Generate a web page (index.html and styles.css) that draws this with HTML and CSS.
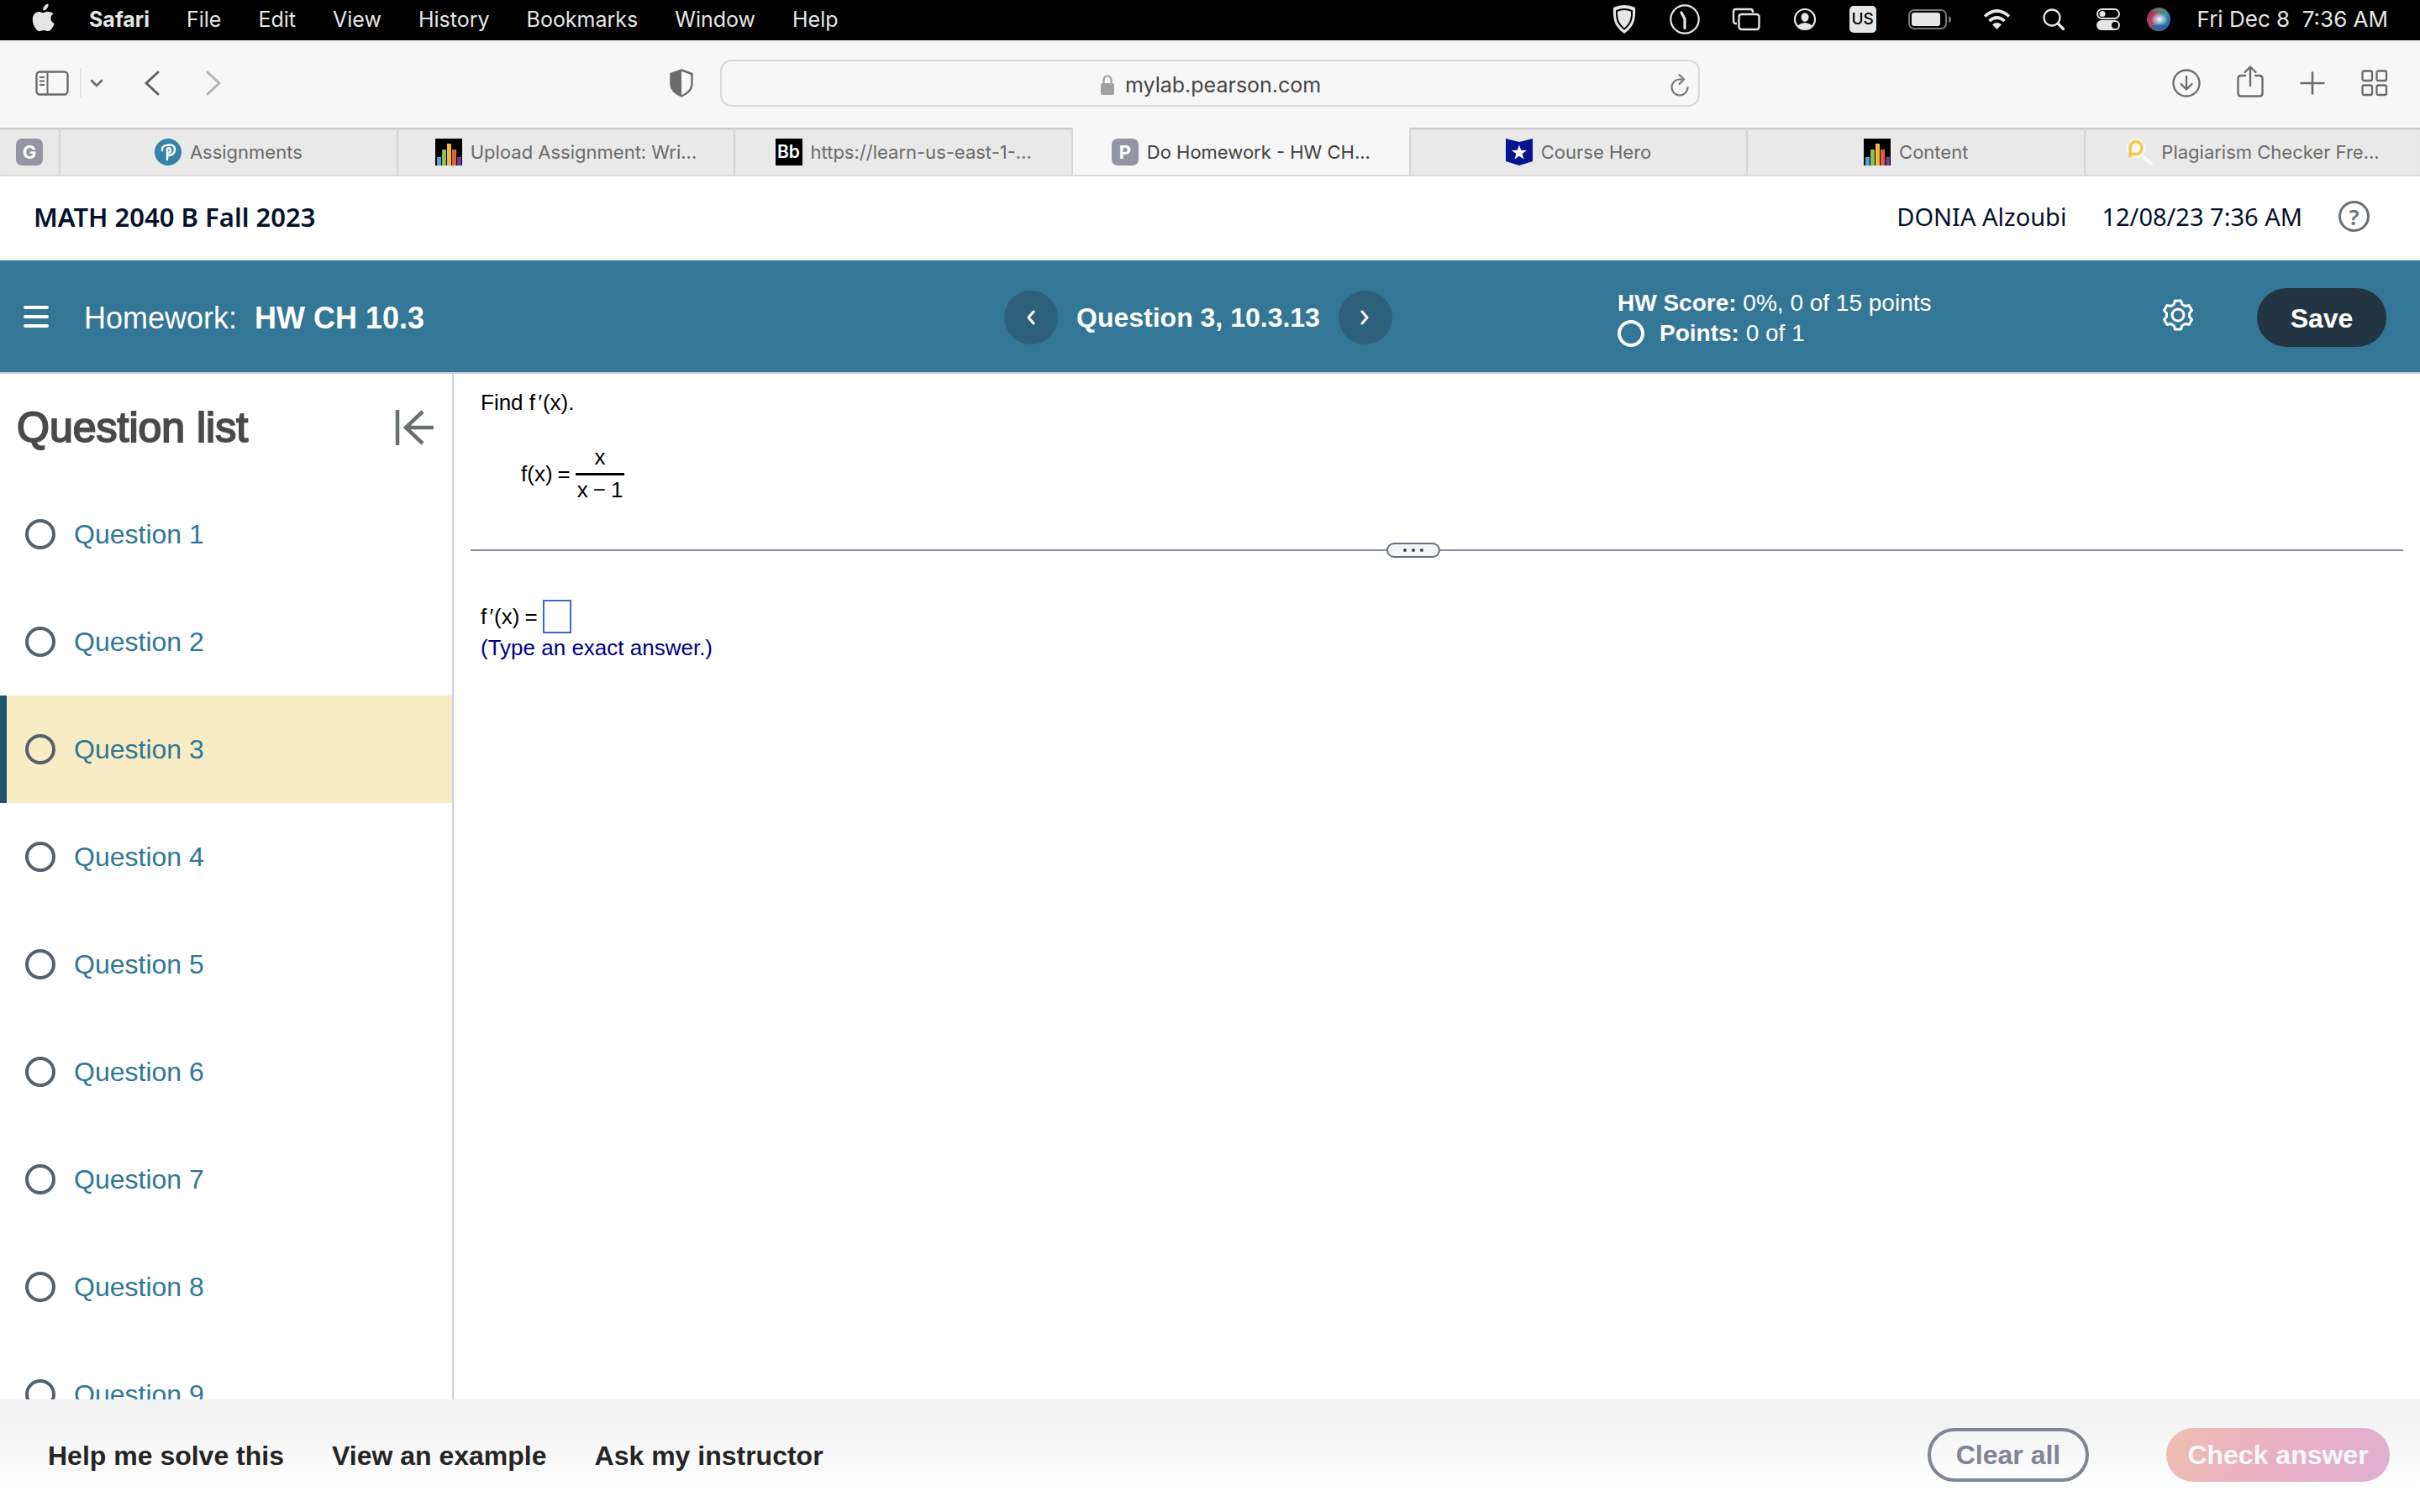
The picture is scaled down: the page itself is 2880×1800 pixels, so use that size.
FILE: index.html
```html
<!DOCTYPE html>
<html lang="en">
<head>
    <meta charset="UTF-8">
    <meta name="viewport" content="width=device-width, initial-scale=1.0">
    <title>Do Homework - HW CH 10.3</title>
    <link rel="stylesheet" href="styles.css">
</head>
<body>
    <!-- system menu bar -->
    <header class="menubar">
        <nav class="menus">
            <svg class="apple" width="28" height="34" viewBox="0 0 28 34" fill="#e6e6e6"><path d="M19.5 0.500c.3 2.400-.6 4.300-1.800 5.700-1.200 1.400-2.800 2.200-4.500 2.100-.2-2 .7-4 1.800-5.300C16.200 1.600 18 .7 19.500.500zM25.800 12.200c-2.200 1.400-3.400 3.200-3.300 5.700.1 2.900 1.600 4.900 4.300 6-.6 1.900-1.500 3.700-2.700 5.400-1.300 1.900-2.700 3.800-4.800 3.800-2.100 0-2.700-1.200-5.100-1.200s-3.200 1.200-5.200 1.300c-2.100.1-3.700-2-5-3.900C1.300 25.400-.6 18.500 2.100 13.800 3.500 11.400 5.900 10 8.400 9.900c2 0 3.900 1.400 5.100 1.400s3.500-1.700 5.900-1.400c2.500.1 4.700 1 6.400 2.300z"/></svg>
            <b>Safari</b><span>File</span><span>Edit</span><span>View</span><span>History</span><span>Bookmarks</span><span>Window</span><span>Help</span>
        </nav>
        <div class="status">
            <div class="status-icons">
                <svg width="32" height="36" viewBox="0 0 32 36"><path d="M3 4q13-6 26 0 1 15-4 22-4 6-9 9-5-3-9-9Q2 19 3 4z" fill="#e6e6e6"/><path d="M7 8q9-4 18 0 .5 10-3 15-2.500 4-6 6.500-3.500-2.500-6-6.500-3.500-5-3-15z" fill="#e6e6e6" stroke="#000" stroke-width="2"/></svg>
                <svg width="36" height="36" viewBox="0 0 36 36" fill="none" stroke="#e6e6e6" stroke-linecap="round"><circle cx="18" cy="18" r="16.700" stroke-width="2.200"/><path d="M14 10l4 7.500v11" stroke-width="3.200" stroke-linejoin="round"/></svg>
                <svg width="34" height="28" viewBox="0 0 34 28" fill="none" stroke="#e6e6e6" stroke-width="2.400"><path d="M6 19H5q-3 0-3-3V5q0-3 3-3h17q3 0 3 3v1"/><rect x="8.500" y="8" width="24" height="18" rx="3"/></svg>
                <svg width="30" height="28" viewBox="0 0 30 28"><circle cx="15" cy="14" r="12" fill="none" stroke="#e6e6e6" stroke-width="2.200"/><ellipse cx="15" cy="11.500" rx="4.500" ry="5.200" fill="#e6e6e6"/><path d="M6 21.500q9-7 18 0-3.500 5-9 5t-9-5z" fill="#e6e6e6"/></svg>
                <span class="lang">US</span>
                <svg width="51" height="24" viewBox="0 0 51 24"><rect x="1" y="1" width="44" height="22" rx="6" fill="none" stroke="#777" stroke-width="2"/><rect x="4" y="4" width="34" height="16" rx="3" fill="#e6e6e6"/><path d="M48 8q3 1 3 4t-3 4z" fill="#777"/></svg>
                <svg width="33" height="26" viewBox="0 0 33 26" fill="none" stroke="#e6e6e6" stroke-width="3.600"><path d="M2 9.500q14.500-13 29 0"/><path d="M7.500 15q9-8 18 0"/><path d="M16.500 25l-5.500-5.700q5.500-4.500 11 0z" fill="#e6e6e6" stroke="none"/></svg>
                <svg width="26" height="26" viewBox="0 0 26 26" fill="none" stroke="#e6e6e6"><circle cx="11" cy="11" r="9.500" stroke-width="2.300"/><path d="M18 18l6.500 6.500" stroke-width="3.400" stroke-linecap="round"/></svg>
                <svg width="28" height="28" viewBox="0 0 28 28"><rect x="1" y="2" width="26" height="11" rx="5.500" fill="none" stroke="#e6e6e6" stroke-width="2"/><circle cx="7" cy="7.500" r="3.500" fill="#e6e6e6"/><rect x="0" y="15" width="28" height="12" rx="6" fill="#e6e6e6"/><circle cx="22" cy="21" r="4" fill="#000"/></svg>
            </div>
            <svg width="28" height="28" viewBox="0 0 28 28">
                <defs>
                    <linearGradient id="orb" x1="0" y1="0.200" x2="1" y2="0.800"><stop offset="0" stop-color="#8d2c55"/><stop offset=".35" stop-color="#b5476d"/><stop offset=".6" stop-color="#3d7f9c"/><stop offset="1" stop-color="#2668b8"/></linearGradient>
                    <radialGradient id="glow"><stop offset="0" stop-color="#fff"/><stop offset=".35" stop-color="#d8f4ff" stop-opacity=".7"/><stop offset="1" stop-color="#fff" stop-opacity="0"/></radialGradient>
                </defs>
                <circle cx="14" cy="14" r="14" fill="url(#orb)"/><path d="M6 4q9-6 17 1l4 7q-9-5-21-8z" fill="#2f9c78" opacity=".8"/><path d="M4 22q8 0 12-3l8 3q-10 9-20 0z" fill="#2b59a8" opacity=".7"/><ellipse cx="15" cy="14" rx="10" ry="8" fill="url(#glow)"/>
            </svg>
            <span class="clock">Fri Dec 8&nbsp; 7:36 AM</span>
        </div>
    </header>

    <!-- browser toolbar -->
    <div class="toolbar">
        <div class="tools-left">
            <button class="tool" aria-label="Sidebar"><svg width="40" height="30" viewBox="0 0 40 30" fill="none" stroke="#6b6b6b" stroke-width="2.400"><rect x="1.500" y="1.500" width="37" height="27" rx="4"/><path d="M14.500 1.500v27M5 8h6M5 12.500h6M5 17h6" stroke-width="2"/></svg></button>
            <i class="tool-line"></i>
            <button class="tool down" aria-label="Tab groups"><svg width="16" height="10" viewBox="0 0 16 10" fill="none" stroke="#6b6b6b" stroke-width="2.600" stroke-linecap="round" stroke-linejoin="round"><path d="M2 2l6 6 6-6"/></svg></button>
            <button class="tool back" aria-label="Back"><svg width="20" height="30" viewBox="0 0 20 30" fill="none" stroke="#606060" stroke-width="3" stroke-linecap="round" stroke-linejoin="round"><path d="M17 2L3 15l14 13"/></svg></button>
            <button class="tool" aria-label="Forward"><svg width="20" height="30" viewBox="0 0 20 30" fill="none" stroke="#b4b4b4" stroke-width="3" stroke-linecap="round" stroke-linejoin="round"><path d="M3 2l14 13L3 28"/></svg></button>
        </div>
        <button class="tool" aria-label="Privacy report"><svg width="28" height="34" viewBox="0 0 28 34"><path d="M14 1.500l12.500 4.500v12q0 9-12.500 14.500Q1.500 27 1.500 18V6z" fill="none" stroke="#6b6b6b" stroke-width="2.400" stroke-linejoin="round"/><path d="M14 1.500v31Q1.500 27 1.500 18V6z" fill="#6b6b6b"/></svg></button>
        <div class="address">
            <svg width="18" height="24" viewBox="0 0 18 24"><rect x="1" y="10" width="16" height="14" rx="2.500" fill="#a0a0a0"/><path d="M4.500 11V7q0-5.500 4.500-5.500T13.500 7v4" fill="none" stroke="#a0a0a0" stroke-width="2.200"/></svg>
            <span class="url">mylab.pearson.com</span>
            <button class="tool reload" aria-label="Reload"><svg width="24" height="28" viewBox="0 0 24 28" fill="none" stroke="#7a7a7a" stroke-width="2.200" stroke-linecap="round" stroke-linejoin="round"><path d="M14 7.500H12a9.500 9.500 0 1 0 9.500 9.500"/><path d="M11.500 2l5.500 5.500-5.500 5.500"/></svg></button>
        </div>
        <div class="tools-right">
            <button class="tool" aria-label="Downloads"><svg width="34" height="34" viewBox="0 0 34 34" fill="none" stroke="#6b6b6b" stroke-width="2.300" stroke-linecap="round" stroke-linejoin="round"><circle cx="17" cy="17" r="15.500"/><path d="M17 9v15M10.500 18l6.500 6.500 6.500-6.500"/></svg></button>
            <button class="tool share" aria-label="Share"><svg width="32" height="38" viewBox="0 0 32 38" fill="none" stroke="#6b6b6b" stroke-width="2.400" stroke-linecap="round" stroke-linejoin="round"><path d="M10 12H5q-3.500 0-3.500 3.500V33q0 3.500 3.500 3.500h22q3.500 0 3.500-3.500V15.500Q30.500 12 27 12h-5M16 24V2M9.500 8L16 1.500 22.500 8"/></svg></button>
            <button class="tool" aria-label="New tab"><svg width="30" height="28" viewBox="0 0 30 28" stroke="#6b6b6b" stroke-width="2.600" stroke-linecap="round"><path d="M15 1.500v25M1.500 14h27"/></svg></button>
            <button class="tool" aria-label="Tab overview"><svg width="32" height="32" viewBox="0 0 32 32" fill="none" stroke="#6b6b6b" stroke-width="2.300"><rect x="1.500" y="1.500" width="11.500" height="11.500" rx="2"/><rect x="18.500" y="1.500" width="11.500" height="11.500" rx="2"/><rect x="1.500" y="18.500" width="11.500" height="11.500" rx="2"/><rect x="18.500" y="18.500" width="11.500" height="11.500" rx="2"/></svg></button>
        </div>
    </div>

    <nav class="tabs">
        <a class="tab pinned" href="#"><span class="favicon letter">G</span></a>
        <a class="tab" href="#">
            <svg class="favicon" viewBox="0 0 32 32"><circle cx="16" cy="16" r="16" fill="#3584a7"/><path d="M9 14q-1-5 5-6 10-2 10 5 0 6-7 7M15 12v13M15 12q4-2 4 2 0 3-4 3" fill="none" stroke="#fff" stroke-width="2.500" stroke-linecap="round"/></svg>
            Assignments</a>
        <a class="tab" href="#">
            <svg class="favicon" viewBox="0 0 32 32"><path fill="#000" d="M0 0h32v32H0z"/><path fill="#4ca5e0" d="M2 22h5v10H2z"/><path fill="#8cc152" d="M8 13h5v19H8z"/><path fill="#f0b83c" d="M14 6h5v26h-5z"/><path fill="#e2603a" d="M20 13h5v19h-5z"/><path fill="#6c3a9c" d="M26 22h5v10h-5z"/></svg>
            Upload Assignment: Wri...</a>
        <a class="tab" href="#"><span class="favicon bb">Bb</span>https://learn-us-east-1-...</a>
        <a class="tab active" href="#"><span class="favicon letter">P</span>Do Homework - HW CH...</a>
        <a class="tab" href="#">
            <svg class="favicon" viewBox="0 0 32 32"><path d="M0 0l16 4 16-4v27l-16 5-16-5z" fill="#04158f"/><path d="M16 7.500l2.200 6.200 6.800.2-5.400 4.100 1.900 6.500-5.500-3.800-5.500 3.800 1.900-6.500L7 13.900l6.800-.2z" fill="#fff"/></svg>
            Course Hero</a>
        <a class="tab" href="#">
            <svg class="favicon" viewBox="0 0 32 32"><path fill="#000" d="M0 0h32v32H0z"/><path fill="#4ca5e0" d="M2 22h5v10H2z"/><path fill="#8cc152" d="M8 13h5v19H8z"/><path fill="#f0b83c" d="M14 6h5v26h-5z"/><path fill="#e2603a" d="M20 13h5v19h-5z"/><path fill="#6c3a9c" d="M26 22h5v10h-5z"/></svg>
            Content</a>
        <a class="tab" href="#">
            <svg class="favicon" viewBox="0 0 32 32" fill="none"><circle cx="12" cy="12" r="11" fill="#f8f6ee"/><path d="M19 20l11 10" stroke="#fbfbfb" stroke-width="4" stroke-linecap="round"/><path d="M5 22V11a7 7.500 0 1 1 7 7.500H6" stroke="#f3c64e" stroke-width="3.400"/></svg>
            Plagiarism Checker Fre...</a>
    </nav>

    <!-- course header -->
    <div class="course">
        <span class="course-name">MATH 2040 B Fall 2023</span>
        <div class="user">
            <span>DONIA Alzoubi</span>
            <span class="date">12/08/23 7:36 AM</span>
            <button class="help" aria-label="Help">?</button>
        </div>
    </div>

    <div class="banner">
        <div class="assignment">
            <button class="burger" aria-label="Menu"><svg width="30" height="26" viewBox="0 0 30 26" stroke="#fff" stroke-width="4" stroke-linecap="round"><path d="M2 2h26M2 13h26M2 24h26"/></svg></button>
            <span class="hw-label">Homework:</span>
            <b>HW CH 10.3</b>
        </div>
        <div class="question-nav">
            <button class="round" aria-label="Previous question"><svg width="12" height="18" viewBox="0 0 12 18" fill="none" stroke="#fff" stroke-width="3" stroke-linecap="round" stroke-linejoin="round"><path d="M9 2L3 9l6 7"/></svg></button>
            <b>Question 3, 10.3.13</b>
            <button class="round" aria-label="Next question"><svg width="12" height="18" viewBox="0 0 12 18" fill="none" stroke="#fff" stroke-width="3" stroke-linecap="round" stroke-linejoin="round"><path d="M2 2l6 7-6 7"/></svg></button>
        </div>
        <div class="score">
            <div><b>HW Score:</b> 0%, 0 of 15 points</div>
            <div class="points"><i class="ring"></i><span><b>Points:</b> 0 of 1</span></div>
        </div>
        <div class="actions">
            <button class="gear" aria-label="Settings"><svg width="36" height="38" viewBox="0 0 36 38" fill="none" stroke="#fff" stroke-width="3" stroke-linejoin="round"><path d="M14.500 2h7l1.500 4.500 3.500 2 4.500-1 3.500 6-3 3.500v4l3 3.500-3.500 6-4.500-1-3.500 2-1.500 4.500h-7L13 31.500l-3.500-2-4.500 1-3.500-6 3-3.500v-4l-3-3.500 3.500-6 4.500 1 3.500-2z"/><circle cx="18" cy="19" r="7"/></svg></button>
            <button class="save">Save</button>
        </div>
    </div>

    <div class="workspace">
        <aside class="sidebar">
            <div class="sidebar-head">
                <h2>Question list</h2>
                <button class="collapse" aria-label="Collapse list"><svg width="46" height="42" viewBox="0 0 46 42" fill="none" stroke="#6a7070" stroke-width="4.500"><path d="M3 0v42M46 21H13M33 2L13 21l20 19"/></svg></button>
            </div>
            <ul class="questions">
                <li><a href="#"><i class="ring"></i>Question 1</a></li>
                <li><a href="#"><i class="ring"></i>Question 2</a></li>
                <li class="current"><a href="#"><i class="ring"></i>Question 3</a></li>
                <li><a href="#"><i class="ring"></i>Question 4</a></li>
                <li><a href="#"><i class="ring"></i>Question 5</a></li>
                <li><a href="#"><i class="ring"></i>Question 6</a></li>
                <li><a href="#"><i class="ring"></i>Question 7</a></li>
                <li><a href="#"><i class="ring"></i>Question 8</a></li>
                <li><a href="#"><i class="ring"></i>Question 9</a></li>
            </ul>
        </aside>
        <main class="exercise">
            <p class="prompt">Find f<span class="prime">′</span>(x).</p>
            <div class="formula">
                <span>f(x)<span class="eq">=</span></span>
                <span class="fraction"><span>x</span><span class="denominator">x<span class="eq">−</span>1</span></span>
            </div>
            <div class="splitter"><i class="before"></i><button aria-label="Resize"><i></i><i></i><i></i></button><i class="after"></i></div>
            <div class="answer">
                <label for="answer">f<span class="prime">′</span>(x)<span class="eq">=</span></label>
                <input id="answer" type="text">
            </div>
            <p class="hint">(Type an exact answer.)</p>
        </main>
    </div>

    <footer class="footer">
        <div class="help-links">
            <a href="#">Help me solve this</a>
            <a href="#">View an example</a>
            <a href="#">Ask my instructor</a>
        </div>
        <div class="buttons">
            <button class="clear">Clear all</button>
            <button class="check">Check answer</button>
        </div>
    </footer>
</body>
</html>
```
FILE: styles.css
```css
*{
    box-sizing: border-box;
}
body{
    margin: 0;
    height: 100vh;
    display: flex;
    flex-direction: column;
    overflow: hidden;
    background: #fff;
    font-family: "Liberation Sans", Arial, sans-serif;
    color: #000;
}
button{
    padding: 0;
    border: none;
    background: none;
    font-family: inherit;
}
a{
    text-decoration: none;
    color: inherit;
}
svg{
    display: block;
    flex: none;
}

/* menu bar */
.menubar{
    height: 48px;
    flex: none;
    display: flex;
    justify-content: space-between;
    padding: 0 38px 2px;
    background: #000;
    color: #e6e6e6;
    font: 25px/46px Inter, sans-serif;
}
.menus, .status, .status-icons{
    display: flex;
    align-items: center;
    white-space: nowrap;
}
.menus{
    gap: 44px;
}
.menus b{
    font-weight: 700;
}
.apple{
    margin: -4px -4px 0 0;
}
.status{
    gap: 32px;
}
.clock{
    font-size: 26px;
}
.status-icons{
    gap: 38px;
}
.lang{
    width: 32px;
    height: 32px;
    border-radius: 5px;
    background: #e6e6e6;
    color: #000;
    font-size: 19px;
    font-weight: 500;
    line-height: 32px;
    text-align: center;
}

/* toolbar */
.toolbar{
    height: 104px;
    flex: none;
    display: flex;
    align-items: center;
    padding: 0 38px 3px 42px;
    background: #f7f7f7;
}
.tools-left{
    width: 755px;
    display: flex;
    align-items: center;
}
.tool-line{
    width: 2px;
    height: 36px;
    margin: 0 10px 0 13px;
    background: #e4e4e4;
}
.back{
    margin: 0 53px 0 48px;
}
.address{
    width: 1166px;
    height: 56px;
    display: flex;
    align-items: center;
    margin-left: 32px;
    padding: 4px 10px 0 450px;
    border: 2px solid #d9d9d9;
    border-radius: 14px;
}
.url{
    flex: 1;
    padding-left: 12px;
    font: 25px/32px Inter, sans-serif;
    color: #454545;
}
.tools-right{
    flex: 1;
    display: flex;
    align-items: center;
    justify-content: flex-end;
    gap: 43px;
}
.share{
    margin-top: -4px;
}

/* tabs */
.tabs{
    height: 58px;
    flex: none;
    display: flex;
    border-bottom: 2px solid #dcdcdc;
    background: #e9e9e9;
    font: 22px/56px Inter, sans-serif;
    color: #6b6b6b;
}
.tab{
    flex: 1 1 0;
    display: flex;
    align-items: center;
    justify-content: center;
    gap: 10px;
    padding-top: 1px;
    white-space: nowrap;
    border-right: 2px solid #d6d6d6;
    box-shadow: inset 0 3px 2px -1px #c4c4c4;
}
.tab:last-child{
    flex: 0 0 398px;
    border-right: none;
}
.pinned{
    flex: 0 0 72px;
}
.active{
    background: #f7f7f7;
    box-shadow: none;
    color: #404040;
}
.favicon{
    width: 32px;
    height: 32px;
    line-height: 32px;
    text-align: center;
    color: #fff;
}
.letter{
    border-radius: 7px;
    background: #9495a2;
    font-weight: 700;
}
.bb{
    background: #000;
    font-size: 21px;
    font-weight: 600;
}

/* course header */
.course{
    height: 100px;
    flex: none;
    display: flex;
    align-items: center;
    justify-content: space-between;
    padding: 0 60px 5px 40px;
    font: 29px/40px "Noto Sans", sans-serif;
    color: #05112a;
}
.course-name{
    font-size: 31px;
    font-weight: 600;
}
.user{
    display: flex;
    align-items: center;
}
.date{
    margin: 0 43px 0 42px;
}
.help{
    width: 37px;
    height: 37px;
    border: 3px solid #6a7070;
    border-radius: 50%;
    color: #6a7070;
    font: 600 26px/30px "Noto Sans", sans-serif;
}

/* assignment banner */
.banner{
    height: 135px;
    flex: none;
    display: grid;
    grid-template-columns: 1195fr 730fr 649fr 306fr;
    align-items: center;
    border-bottom: 2px solid #c7cfdc;
    background: linear-gradient(#337a9b, #347695 10px);
    color: #fff;
    white-space: nowrap;
}
.assignment{
    display: flex;
    align-items: center;
    padding: 4px 0 0 28px;
    font-size: 36px;
    line-height: 44px;
}
.burger{
    padding-bottom: 4px;
}
.hw-label{
    margin: 0 21px 0 42px;
}
.question-nav{
    display: flex;
    align-items: center;
    gap: 22px;
    padding-top: 3px;
    font-size: 32px;
}
.round{
    width: 64px;
    height: 64px;
    display: flex;
    align-items: center;
    justify-content: center;
    border-radius: 50%;
    background: #2d607b;
}
.score{
    font-size: 28px;
    line-height: 36px;
    padding-top: 4px;
}
.points{
    display: flex;
    align-items: center;
    gap: 18px;
}
.ring{
    width: 32px;
    height: 32px;
    flex: none;
    border: 4px solid #fff;
    border-radius: 50%;
}
.actions{
    display: flex;
    align-items: center;
    justify-content: space-between;
    padding: 2px 40px 0 0;
}
.gear{
    padding-bottom: 6px;
}
.save{
    width: 154px;
    height: 70px;
    padding-top: 4px;
    border-radius: 35px;
    background: #233442;
    color: #fff;
    font-size: 32px;
    font-weight: 700;
}

/* workspace */
.workspace{
    flex: 1;
    min-height: 0;
    display: flex;
}
.sidebar{
    width: 540px;
    flex: none;
    overflow: hidden;
    border-right: 2px solid #d0d0dc;
}
.sidebar-head{
    height: 127px;
    display: flex;
    align-items: center;
    justify-content: space-between;
    padding: 0 22px 0 20px;
}
.sidebar-head h2{
    margin: 0;
    font-size: 50px;
    font-weight: 400;
    line-height: 60px;
    color: #4a4a4a;
    -webkit-text-stroke: 2px #4a4a4a;
}
.questions{
    margin: 0;
    padding: 0;
    list-style: none;
}
.questions a{
    height: 128px;
    display: flex;
    align-items: center;
    gap: 22px;
    padding-left: 22px;
    border-left: 8px solid transparent;
    font-size: 32px;
    color: #2f7796;
}
.questions .ring{
    width: 36px;
    height: 36px;
    border-color: #56616e;
}
.questions .current a{
    background: #f8ecc4;
    border-left-color: #1d5470;
}
.exercise{
    flex: 1;
    padding: 17px 20px 0;
    font-size: 26px;
    line-height: 34px;
}
.exercise p{
    margin: 0;
    padding-left: 12px;
}
.prime{
    margin: 0 2px;
    font-style: italic;
}
.eq{
    margin: 0 6px;
}
.formula{
    display: flex;
    align-items: center;
    padding: 31px 0 0 60px;
}
.fraction{
    display: flex;
    flex-direction: column;
    align-items: center;
}
.denominator{
    margin-top: 2px;
    padding: 0 2px;
    border-top: 3px solid #000;
}
.splitter{
    display: flex;
    align-items: center;
    padding: 46px 0 50px;
}
.splitter .before, .splitter .after{
    height: 2px;
    flex: 1090;
    background: #8792a2;
}
.splitter .after{
    flex: 1146;
}
.splitter button{
    width: 64px;
    height: 18px;
    display: flex;
    align-items: center;
    justify-content: center;
    gap: 6px;
    border: 2px solid #65717f;
    border-radius: 9px;
    background: #f3f5f7;
}
.splitter button i{
    width: 4px;
    height: 4px;
    border-radius: 50%;
    background: #444;
}
.answer{
    display: flex;
    align-items: center;
    padding-left: 12px;
}
.answer input{
    width: 34px;
    height: 40px;
    padding: 0;
    border: 2px solid #3f66c8;
    font-size: 26px;
}
.exercise .hint{
    color: #000080;
}

/* footer */
.footer{
    height: 134px;
    flex: none;
    display: flex;
    align-items: center;
    justify-content: space-between;
    padding: 0 36px 2px 57px;
    background: linear-gradient(#f0f0f0, #fff 85%);
    font-size: 32px;
    font-weight: 700;
    color: #252525;
}
.help-links{
    display: flex;
    gap: 57px;
    padding-top: 2px;
}
.buttons{
    display: flex;
    gap: 92px;
}
.buttons button{
    height: 64px;
    border-radius: 32px;
    font-size: 32px;
    font-weight: 700;
}
.buttons .clear{
    width: 192px;
    border: 4px solid #808692;
    color: #808692;
}
.buttons .check{
    width: 266px;
    background: linear-gradient(115deg, #efc0b0, #eab2c0 40%, #e6afc8 65%, #dfb0d0);
    color: #f7f8fa;
}
```
